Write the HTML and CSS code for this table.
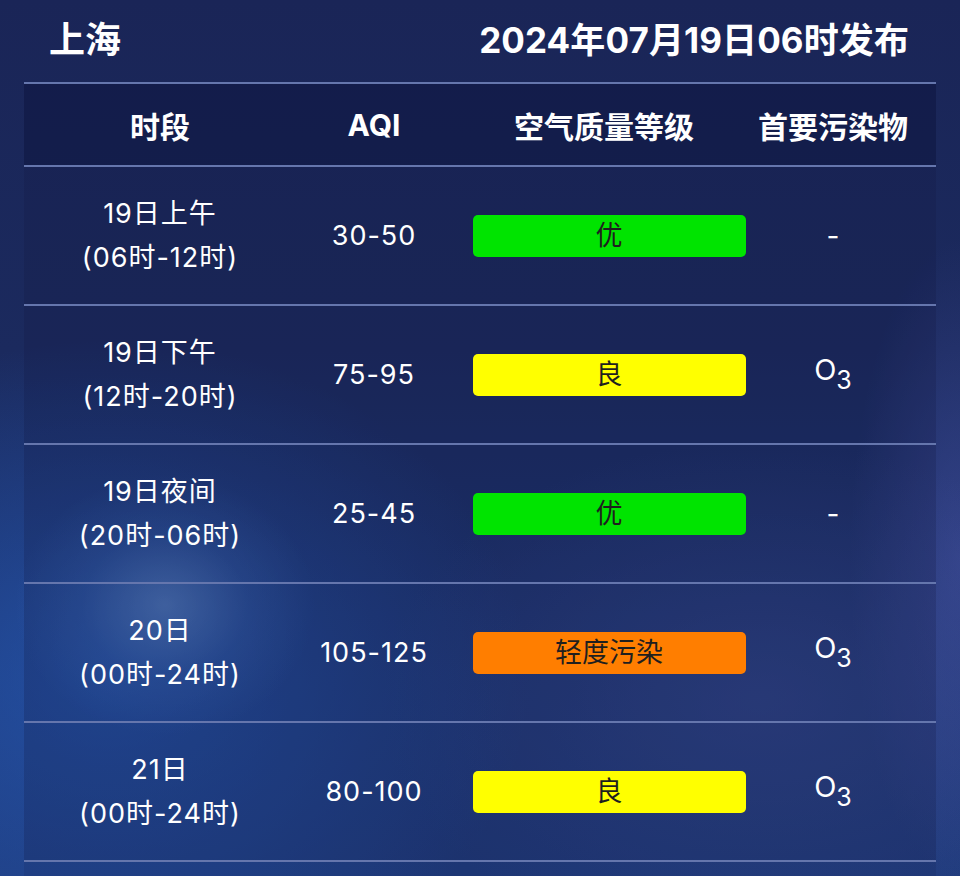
FILE: index.html
```html
<!DOCTYPE html>
<html lang="zh-CN">
<head>
<meta charset="utf-8">
<title>上海 空气质量预报</title>
<link rel="stylesheet" href="styles.css">
</head>
<body>
<div class="page">
  <div class="title-bar">
    <div class="city">上海</div>
    <div class="issued">2024年07月19日06时发布</div>
  </div>
  <div class="table">
    <div class="row head">
      <div class="cell">时段</div>
      <div class="cell">AQI</div>
      <div class="cell level-head">空气质量等级</div>
      <div class="cell">首要污染物</div>
    </div>
    <div class="row">
      <div class="cell period"><span>19日上午</span><span>(06时-12时)</span></div>
      <div class="cell aqi">30-50</div>
      <div class="cell"><div class="level good">优</div></div>
      <div class="cell pol">-</div>
    </div>
    <div class="row">
      <div class="cell period"><span>19日下午</span><span>(12时-20时)</span></div>
      <div class="cell aqi">75-95</div>
      <div class="cell"><div class="level moderate">良</div></div>
      <div class="cell pol"><span class="formula">O<sub>3</sub></span></div>
    </div>
    <div class="row">
      <div class="cell period"><span>19日夜间</span><span>(20时-06时)</span></div>
      <div class="cell aqi">25-45</div>
      <div class="cell"><div class="level good">优</div></div>
      <div class="cell pol">-</div>
    </div>
    <div class="row">
      <div class="cell period"><span>20日</span><span>(00时-24时)</span></div>
      <div class="cell aqi">105-125</div>
      <div class="cell"><div class="level light">轻度污染</div></div>
      <div class="cell pol"><span class="formula">O<sub>3</sub></span></div>
    </div>
    <div class="row">
      <div class="cell period"><span>21日</span><span>(00时-24时)</span></div>
      <div class="cell aqi">80-100</div>
      <div class="cell"><div class="level moderate">良</div></div>
      <div class="cell pol"><span class="formula">O<sub>3</sub></span></div>
    </div>
    <div class="row tail"></div>
  </div>
</div>
</body>
</html>
```
FILE: styles.css
```css
html, body {
  margin: 0;
  padding: 0;
}
body {
  font-family: "Inter", "Noto Sans CJK SC", sans-serif;
  color: #ffffff;
  background: #1a2658;
}
.page {
  width: 960px;
  height: 876px;
  overflow: hidden;
  box-sizing: border-box;
  padding: 0 24px;
  background:
    radial-gradient(ellipse 150px 130px at 165px 605px, rgba(125,170,230,0.45), rgba(80,130,210,0.2) 55%, rgba(60,110,200,0) 100%),
    radial-gradient(ellipse 420px 340px at 110px 680px, rgba(40,100,200,0.55), rgba(40,100,200,0) 100%),
    radial-gradient(ellipse 380px 260px at 760px 700px, rgba(70,85,160,0.4), rgba(70,85,160,0) 100%),
    radial-gradient(ellipse 110px 320px at 960px 560px, rgba(70,80,160,0.55), rgba(70,80,160,0) 100%),
    linear-gradient(180deg, #1a2557 0%, #1b2a5e 40%, #1d3470 70%, #1f3b7c 100%);
}
.title-bar {
  height: 82px;
  display: flex;
  align-items: center;
  justify-content: space-between;
  padding: 0 27px 8px 25px;
  box-sizing: border-box;
  font-weight: 700;
  white-space: nowrap;
}
.city {
  font-size: 36px;
}
.issued {
  font-size: 35px;
  letter-spacing: 0.1px;
}
.table {
  border-top: 2px solid #6576ad;
}
.row {
  display: grid;
  grid-template-columns: 272px 156px 314px 134px 36px;
  height: 137px;
  border-bottom: 2px solid #6576ad;
  background: rgba(16, 24, 66, 0.22);
}
.row.head {
  height: 81px;
  background: rgba(12, 18, 58, 0.45);
  font-weight: 700;
  font-size: 30px;
}
.row.tail {
  background: rgba(16, 24, 66, 0.12);
}
.cell {
  display: flex;
  flex-direction: column;
  align-items: center;
  justify-content: center;
  text-align: center;
  white-space: nowrap;
}
.level-head {
  padding-right: 10px;
}
.period {
  font-size: 27px;
  line-height: 44px;
  letter-spacing: 1px;
}
.aqi {
  font-size: 27px;
  letter-spacing: 1px;
}
.pol {
  font-size: 28px;
}
.formula {
  font-size: 29px;
  margin-bottom: 10px;
}
.formula sub {
  font-size: 25px;
  vertical-align: -9px;
  line-height: 0;
}
.level {
  width: 273px;
  height: 42px;
  border-radius: 5px;
  color: #1f1f1f;
  font-size: 27px;
  line-height: 42px;
  text-align: center;
}
.good {
  background: #00e400;
}
.moderate {
  background: #ffff00;
}
.light {
  background: #ff7e00;
}
```
